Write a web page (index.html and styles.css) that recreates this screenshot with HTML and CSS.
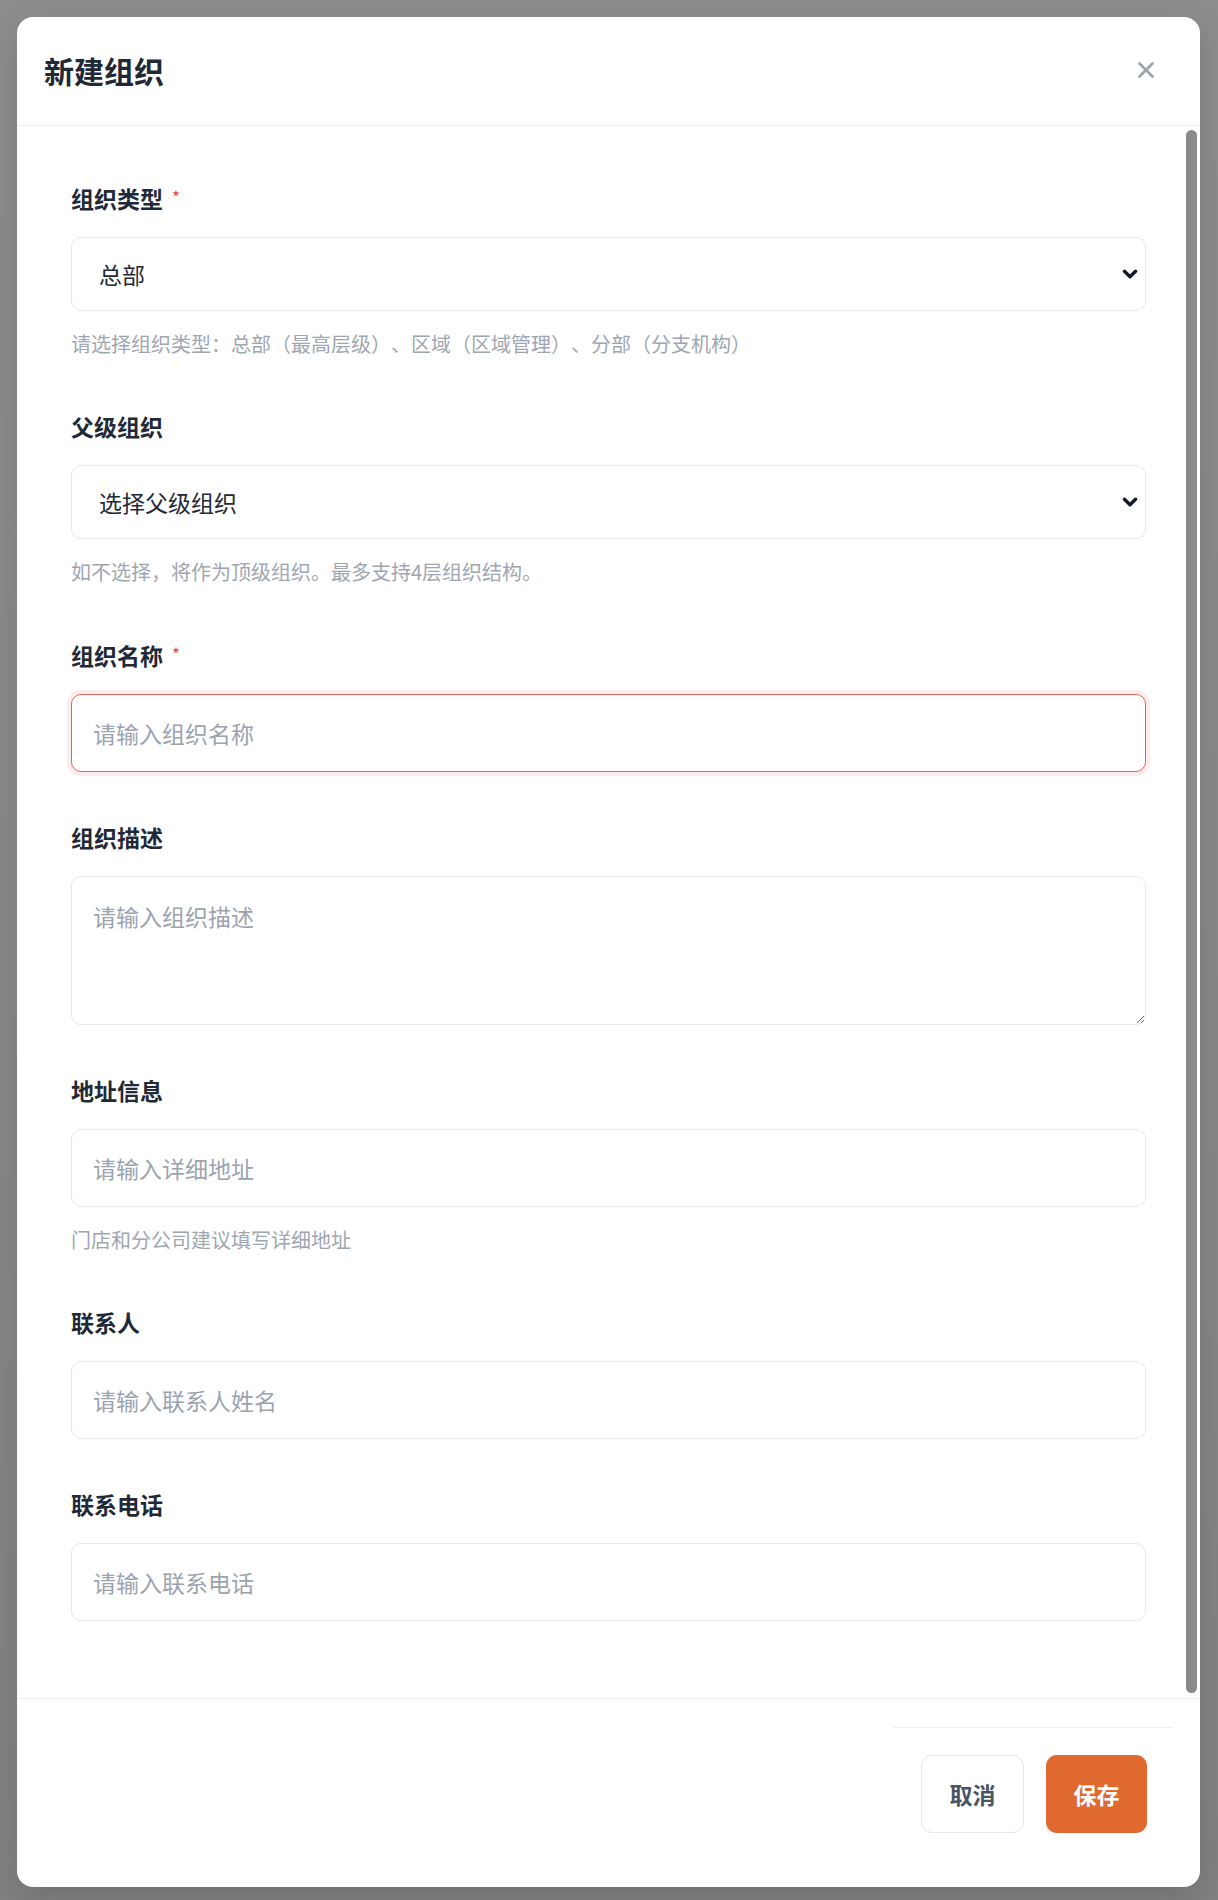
FILE: index.html
```html
<!DOCTYPE html>
<html lang="zh-CN">
<head>
<meta charset="utf-8">
<title>新建组织</title>
<link rel="stylesheet" href="styles.css">
</head>
<body>
<div class="backdrop">
  <div class="modal" role="dialog" aria-labelledby="modal-title">
    <header class="modal-header">
      <h2 class="modal-title" id="modal-title">新建组织</h2>
      <button class="close-btn" type="button" aria-label="关闭">
        <svg viewBox="0 0 18 18" width="18" height="18"><path d="M2.5 2.5L15.5 15.5M15.5 2.5L2.5 15.5"/></svg>
      </button>
    </header>
    <div class="modal-body">
      <form class="form">
        <div class="field">
          <label class="label">组织类型<span class="req">*</span></label>
          <div class="select-wrap">
            <select class="control select"><option>总部</option><option>区域</option><option>分部</option></select>
            <svg class="chev" viewBox="0 0 14 9" width="14" height="9"><path d="M2 2L7 7L12 2"/></svg>
          </div>
          <p class="hint">请选择组织类型：总部（最高层级）、区域（区域管理）、分部（分支机构）</p>
        </div>
        <div class="field">
          <label class="label">父级组织</label>
          <div class="select-wrap">
            <select class="control select"><option>选择父级组织</option></select>
            <svg class="chev" viewBox="0 0 14 9" width="14" height="9"><path d="M2 2L7 7L12 2"/></svg>
          </div>
          <p class="hint">如不选择，将作为顶级组织。最多支持4层组织结构。</p>
        </div>
        <div class="field">
          <label class="label">组织名称<span class="req">*</span></label>
          <input class="control input is-focus" type="text" placeholder="请输入组织名称">
        </div>
        <div class="field">
          <label class="label">组织描述</label>
          <textarea class="control textarea" placeholder="请输入组织描述"></textarea>
        </div>
        <div class="field">
          <label class="label">地址信息</label>
          <input class="control input" type="text" placeholder="请输入详细地址">
          <p class="hint">门店和分公司建议填写详细地址</p>
        </div>
        <div class="field">
          <label class="label">联系人</label>
          <input class="control input" type="text" placeholder="请输入联系人姓名">
        </div>
        <div class="field">
          <label class="label">联系电话</label>
          <input class="control input" type="text" placeholder="请输入联系电话">
        </div>
      </form>
      <div class="scroll-thumb" aria-hidden="true"></div>
    </div>
    <footer class="modal-footer">
      <div class="actions">
        <button class="btn btn-cancel" type="button">取消</button>
        <button class="btn btn-save" type="button">保存</button>
      </div>
    </footer>
  </div>
</div>
</body>
</html>
```
FILE: styles.css
```css
* { box-sizing: border-box; }

html, body {
  margin: 0;
  padding: 0;
}

body {
  font-family: "Noto Sans CJK SC", "Noto Sans", sans-serif;
  color: #1f2937;
  background: #888888;
  text-spacing-trim: space-all;
}

.backdrop {
  min-height: 1900px;
  padding: 17px 18px 13px 17px;
  background: linear-gradient(180deg, #8c8c8c 0%, #878787 60%, #808080 100%);
}

.modal {
  width: 1183px;
  height: 1870px;
  background: #ffffff;
  border-radius: 16px;
  display: flex;
  flex-direction: column;
  overflow: hidden;
  box-shadow: 0 10px 30px rgba(0, 0, 0, 0.12);
}

.modal-header {
  height: 109px;
  flex: none;
  display: flex;
  align-items: center;
  justify-content: space-between;
  padding: 0 38px 0 27px;
  border-bottom: 1px solid #f0f0f2;
}

.modal-title {
  margin: 0;
  font-size: 30px;
  line-height: 40px;
  font-weight: 700;
  color: #1f2937;
  margin-top: -2px;
}

.close-btn {
  width: 32px;
  height: 32px;
  padding: 0;
  border: none;
  background: transparent;
  display: flex;
  align-items: center;
  justify-content: center;
  margin-top: -2px;
}

.close-btn svg path {
  stroke: #9ca3af;
  stroke-width: 2.8;
  stroke-linecap: round;
  fill: none;
}

.modal-body {
  flex: 1;
  position: relative;
  overflow: hidden;
}

.form {
  padding: 55px 54px 0 54px;
}

.field + .field {
  margin-top: 49px;
}

.label {
  display: block;
  font-size: 23px;
  line-height: 32px;
  font-weight: 600;
  color: #1f2937;
  margin-bottom: 23px;
}

.req {
  color: #ef4444;
  font-size: 17px;
  margin-left: 9px;
  vertical-align: 4px;
  font-weight: 400;
}

.control {
  display: block;
  width: 100%;
  font-family: inherit;
  font-size: 23px;
  color: #1f2937;
  background: #ffffff;
  border: 1px solid #e5e7eb;
  border-radius: 10px;
  outline: none;
}

.control::placeholder {
  color: #9ca3af;
}

.select-wrap {
  position: relative;
}

.select {
  height: 74px;
  padding: 0 48px 0 27px;
  appearance: none;
  -webkit-appearance: none;
  line-height: 32px;
}

.chev {
  position: absolute;
  right: 8px;
  top: 32px;
  pointer-events: none;
  width: 16px;
  height: 10px;
}

.chev path {
  stroke: #111827;
  stroke-width: 3;
  stroke-linecap: round;
  stroke-linejoin: round;
  fill: none;
}

.input {
  height: 78px;
  padding: 0 21px;
}

.input.is-focus {
  border: 1.5px solid #e36363;
  box-shadow: 0 0 0 4px rgba(239, 68, 68, 0.1);
}

.textarea {
  height: 149px;
  padding: 22px 21px;
  line-height: 34px;
  resize: vertical;
}

.hint {
  margin: 16px 0 0;
  font-size: 20px;
  line-height: 34px;
  color: #a0a6b1;
}

.scroll-thumb {
  position: absolute;
  top: 4px;
  bottom: 5px;
  right: 3px;
  width: 11px;
  border-radius: 6px;
  background: #8a8a8a;
}

.modal-footer {
  height: 189px;
  flex: none;
  border-top: 1px solid #f0f0f2;
  padding: 28px 27px 0 0;
  display: flex;
  justify-content: flex-end;
  align-items: flex-start;
}

.actions {
  display: flex;
  gap: 22px;
  border-top: 1px solid #eeeff1;
  padding: 27px 26px 0 28px;
}

.btn {
  height: 78px;
  padding: 0 27.5px;
  font-family: inherit;
  font-size: 23px;
  font-weight: 600;
  border-radius: 11px;
  line-height: 1;
}

.btn-cancel {
  background: #ffffff;
  color: #4b5563;
  border: 1px solid #e5e7eb;
}

.btn-save {
  background: #e0692f;
  color: #ffffff;
  border: none;
}
```
